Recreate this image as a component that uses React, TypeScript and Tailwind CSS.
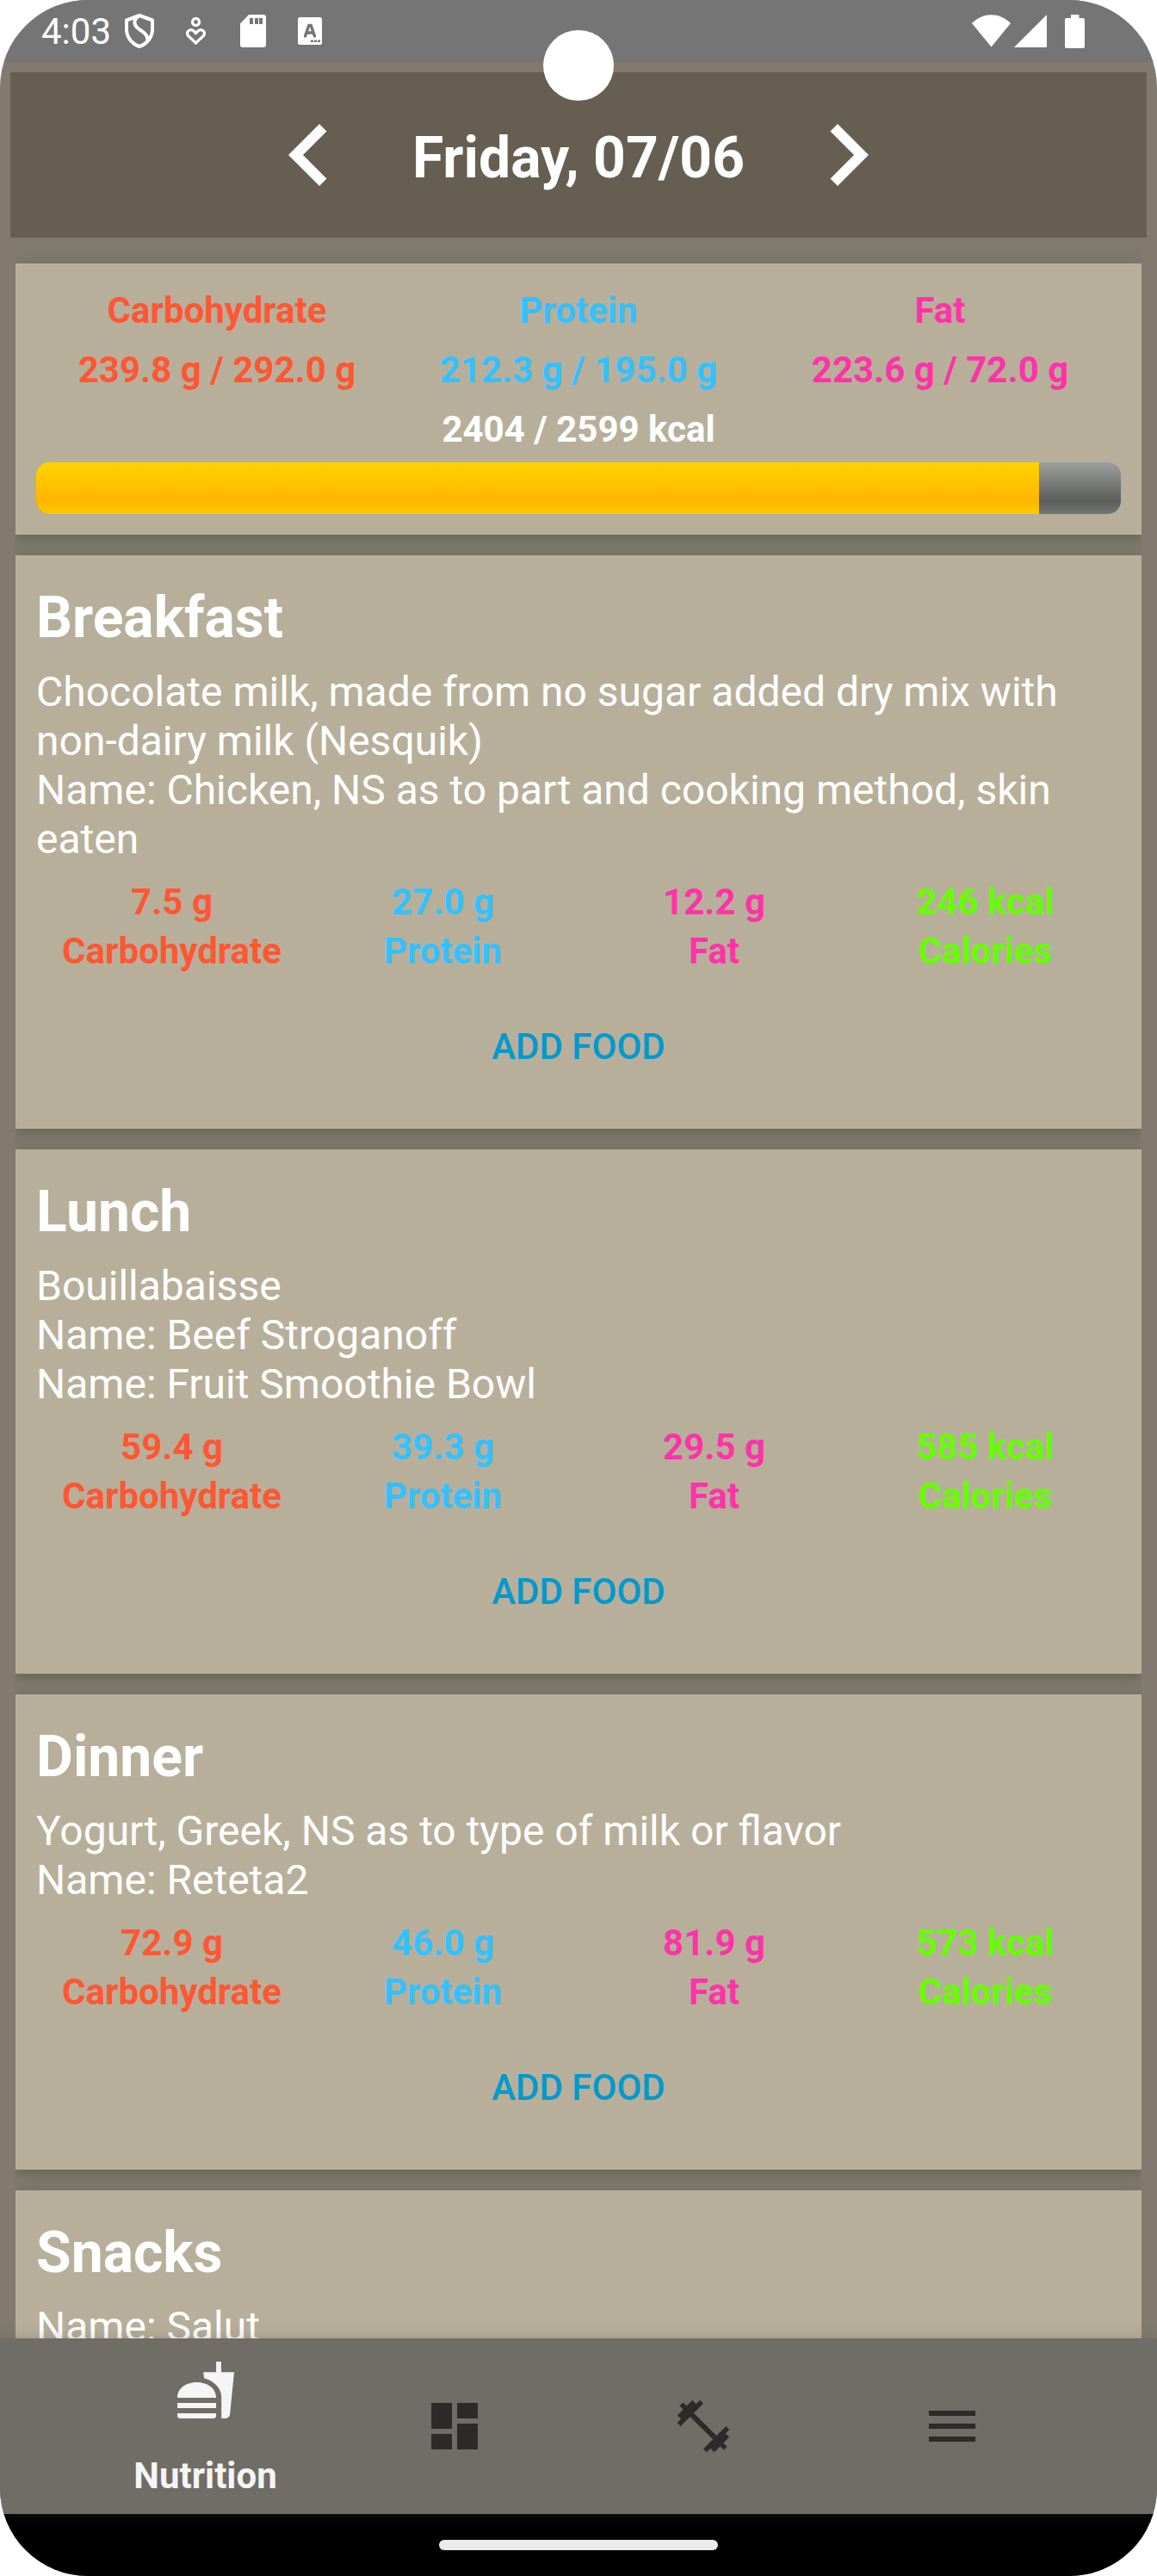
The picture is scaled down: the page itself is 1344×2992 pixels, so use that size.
import React from "react";

type Macro = { label: string; value: string; tone: string };
type Meal = { title: string; foods: string[]; macros?: Macro[] };

const CARB = "text-[#ff5733]";
const PROTEIN = "text-[#33c1ff]";
const FAT = "text-[#ff33a8]";
const KCAL = "text-[#66ff00]";

const totals: Macro[] = [
  { label: "Carbohydrate", value: "239.8 g / 292.0 g", tone: CARB },
  { label: "Protein", value: "212.3 g / 195.0 g", tone: PROTEIN },
  { label: "Fat", value: "223.6 g / 72.0 g", tone: FAT },
];

const macros = (carb: string, protein: string, fat: string, kcal: string): Macro[] => [
  { label: "Carbohydrate", value: carb, tone: CARB },
  { label: "Protein", value: protein, tone: PROTEIN },
  { label: "Fat", value: fat, tone: FAT },
  { label: "Calories", value: kcal, tone: KCAL },
];

const meals: Meal[] = [
  {
    title: "Breakfast",
    foods: [
      "Chocolate milk, made from no sugar added dry mix with non-dairy milk (Nesquik)",
      "Name: Chicken, NS as to part and cooking method, skin eaten",
    ],
    macros: macros("7.5 g", "27.0 g", "12.2 g", "246 kcal"),
  },
  {
    title: "Lunch",
    foods: ["Bouillabaisse", "Name: Beef Stroganoff", "Name: Fruit Smoothie Bowl"],
    macros: macros("59.4 g", "39.3 g", "29.5 g", "585 kcal"),
  },
  {
    title: "Dinner",
    foods: ["Yogurt, Greek, NS as to type of milk or flavor", "Name: Reteta2"],
    macros: macros("72.9 g", "46.0 g", "81.9 g", "573 kcal"),
  },
  { title: "Snacks", foods: ["Name: Salut"] },
];

const CARD =
  "shrink-0 bg-[#b8af9b] px-6 shadow-[0_0_18px_rgba(90,100,80,0.35),0_5px_10px_rgba(70,72,58,0.3)]";

function StatusBar() {
  return (
    <div className="flex h-[72px] shrink-0 items-center justify-between bg-[#757575] pr-[84px] pl-12 text-white">
      <div className="flex items-center">
        <span className="text-[42px] leading-[49px]">4:03</span>
        <svg className="ml-4 h-10 w-[34px]" viewBox="0 0 34 40" fill="none" stroke="currentColor" strokeWidth="4" strokeLinejoin="round">
          <path d="M17 2 L32 7.500 V18 C32 27 26 35 17 38 C8 35 2 27 2 18 V7.500 Z" />
          <path d="M15 3 C10 8 10 13 16 17.500 C22 22 28 25 26 32" />
        </svg>
        <svg className="ml-[37px] h-8 w-[23px]" viewBox="0 0 23 32" fill="none" stroke="currentColor" strokeWidth="3.200">
          <circle cx="11.500" cy="5.500" r="4" />
          <path d="M11.500 18.500 L9 16 C5 12.500 -0.500 17 2.500 21.500 L11.500 30 L20.500 21.500 C23.500 17 18 12.500 14 16 Z" strokeLinejoin="miter" />
        </svg>
        <svg className="ml-10 h-[38px] w-[30px]" viewBox="0 0 30 38" fill="currentColor">
          <path fillRule="evenodd" d="M10 0 H27 Q30 0 30 3 V35 Q30 38 27 38 H3 Q0 38 0 35 V10.500 Z M11 4 V11 H15 V4 Z M17 4 V11 H21 V4 Z M22 4 V11 H26 V4 Z" />
        </svg>
        <svg className="ml-[37px] h-8 w-7" viewBox="0 0 28 32">
          <rect width="28" height="32" rx="2.500" fill="currentColor" />
          <path d="M8.500 22 L12.800 9.500 H15.200 L19.500 22 M10 18 H18" fill="none" stroke="#757575" strokeWidth="3.400" strokeLinecap="round" strokeLinejoin="round" />
          <path d="M15 27.700 H18 M19 27.700 H22 M23 27.700 H26" stroke="#757575" strokeWidth="2.600" />
        </svg>
      </div>
      <div className="flex items-center">
        <svg className="h-[38px] w-[45px]" viewBox="0 0 45 38" fill="currentColor">
          <path d="M0 10 C13 -3 32 -3 45 10 L22.500 37.500 Z" />
        </svg>
        <svg className="ml-1 h-[38px] w-[38px]" viewBox="0 0 38 38" fill="currentColor">
          <path d="M38 0 V38 H0 Z" />
        </svg>
        <svg className="ml-[21px] h-[39px] w-[23px]" viewBox="0 0 23 39" fill="currentColor">
          <path d="M7 0 H16.500 V4 H21 Q23 4 23 6 V37 Q23 39 21 39 H2 Q0 39 0 37 V6 Q0 4 2 4 H7 Z" />
        </svg>
      </div>
    </div>
  );
}

function DateHeader() {
  return (
    <header className="mx-3 mt-3 flex shrink-0 items-center justify-center bg-[#665e50] py-6 text-white">
      <button type="button" aria-label="Previous day" className="size-36">
        <svg viewBox="0 0 24 24" fill="currentColor">
          <path d="M15.410 7.410 14 6l-6 6 6 6 1.410-1.410L10.830 12z" />
        </svg>
      </button>
      <h1 className="px-12 pt-2 text-[66px] leading-[78px] font-bold">Friday, 07/06</h1>
      <button type="button" aria-label="Next day" className="size-36">
        <svg viewBox="0 0 24 24" fill="currentColor">
          <path d="M10 6 8.590 7.410 13.170 12l-4.580 4.590L10 18l6-6z" />
        </svg>
      </button>
    </header>
  );
}

function Summary() {
  const eaten = 2404;
  const goal = 2599;
  return (
    <section className={`${CARD} pt-5 pb-6 text-center text-[42px] leading-[69px] font-bold`}>
      <div className="grid grid-cols-3">
        {totals.map((m) => (
          <div key={m.label} className={m.tone}>
            <p>{m.label}</p>
            <p className="whitespace-nowrap">{m.value}</p>
          </div>
        ))}
      </div>
      <p className="text-white">
        {eaten} / {goal} kcal
      </p>
      <div
        role="progressbar"
        aria-label="Calories eaten"
        aria-valuenow={eaten}
        aria-valuemax={goal}
        className="mt-1 h-[60px] overflow-hidden rounded-[15px] bg-[linear-gradient(#9d9e9d,#5a5d5a_75%,#747674)]"
      >
        <div
          className="h-full bg-[linear-gradient(#ffd300,#ffb600_75%,#ffcb00)]"
          style={{ width: `${(eaten / goal) * 100}%` }}
        />
      </div>
    </section>
  );
}

function MealCard({ meal }: { meal: Meal }) {
  return (
    <section className={`${CARD} pt-[34px] pb-6 text-white`}>
      <h2 className="mb-[18px] text-[66px] leading-[78px] font-bold">{meal.title}</h2>
      <div className="text-[48px] leading-[57px]">
        {meal.foods.map((food) => (
          <p key={food}>{food}</p>
        ))}
      </div>
      {meal.macros && (
        <>
          <div className="mt-4 grid grid-cols-4 text-center text-[42px] leading-[57px] font-bold">
            {meal.macros.map((m) => (
              <div key={m.label} className={m.tone}>
                <p>{m.value}</p>
                <p>{m.label}</p>
              </div>
            ))}
          </div>
          <button type="button" className="mt-2.5 h-36 w-full text-[42px] leading-[57px] font-medium text-[#0099cc]">
            ADD FOOD
          </button>
        </>
      )}
    </section>
  );
}

function BottomNav() {
  return (
    <nav className="relative grid h-[204px] shrink-0 grid-cols-4 bg-[#706d66] px-[94px] text-[#2d2b29] shadow-[0_0_16px_rgba(80,80,65,0.3)]">
      <a href="#nutrition" aria-current="page" className="flex flex-col items-center justify-between pt-6 pb-5 text-[#f5f5f5]">
        <svg className="size-[72px]" viewBox="0 0 24 24" fill="currentColor">
          <path d="M18.060 22.990h1.660c.84 0 1.530-.64 1.630-1.460L23 5.050h-5V1h-1.970v4.050h-4.970l.3 2.340c1.710.47 3.310 1.320 4.270 2.260 1.440 1.420 2.430 2.890 2.430 5.290v8.050zM1 21.990V21h15.030v.99c0 .55-.45 1-1.010 1H2.010c-.56 0-1.010-.45-1.010-1zm15.030-7c0-8-15.030-8-15.030 0h15.030zM1.020 17h15v2h-15z" />
        </svg>
        <span className="text-[42px] leading-[49px] font-bold">Nutrition</span>
      </a>
      <a href="#dashboard" aria-label="Dashboard" className="flex items-center justify-center">
        <svg className="size-[72px]" viewBox="0 0 24 24" fill="currentColor">
          <path d="M3 13h8V3H3zm0 8h8v-6H3zm10 0h8V11h-8zm0-18v6h8V3z" />
        </svg>
      </a>
      <a href="#workouts" aria-label="Workouts" className="flex items-center justify-center">
        <svg className="size-[72px]" viewBox="0 0 24 24" fill="currentColor">
          <path d="M4.100 2.800 5.500 4.200 7.800 1.900 9.200 3.400 10.700 1.900 12 3.200 8.300 6.900 17.100 15.700 20.800 12 22.100 13.300 20.600 14.800 22.100 16.200 19.800 18.500 21.200 19.900 19.900 21.200 18.500 19.800 16.200 22.100 14.800 20.600 13.300 22.100 12 20.800 15.700 17.100 6.900 8.300 3.200 12 1.900 10.700 3.400 9.200 1.900 7.800 4.200 5.500 2.800 4.100z" />
        </svg>
      </a>
      <a href="#menu" aria-label="Menu" className="flex items-center justify-center">
        <svg className="size-[72px]" viewBox="0 0 24 24" fill="currentColor">
          <path d="M3 18h18v-2H3zm0-5h18v-2H3zm0-7v2h18V6z" />
        </svg>
      </a>
    </nav>
  );
}

export default function App() {
  return (
    <div className="h-screen bg-white">
      <div className="relative flex h-full flex-col overflow-hidden rounded-[102px] bg-[#827a6e] font-['Roboto',sans-serif]">
        <StatusBar />
        <DateHeader />
        <main className="mx-[18px] mt-3 flex min-h-0 flex-1 flex-col gap-6 overflow-hidden pt-[18px]">
          <Summary />
          {meals.map((meal) => (
            <MealCard key={meal.title} meal={meal} />
          ))}
        </main>
        <BottomNav />
        <div className="flex h-[72px] shrink-0 items-center justify-center bg-black">
          <div className="h-3 w-[324px] rounded-full bg-[#ebebeb]" />
        </div>
        <div className="absolute top-[35px] left-1/2 size-[82px] -translate-x-1/2 rounded-full bg-white" />
      </div>
    </div>
  );
}
